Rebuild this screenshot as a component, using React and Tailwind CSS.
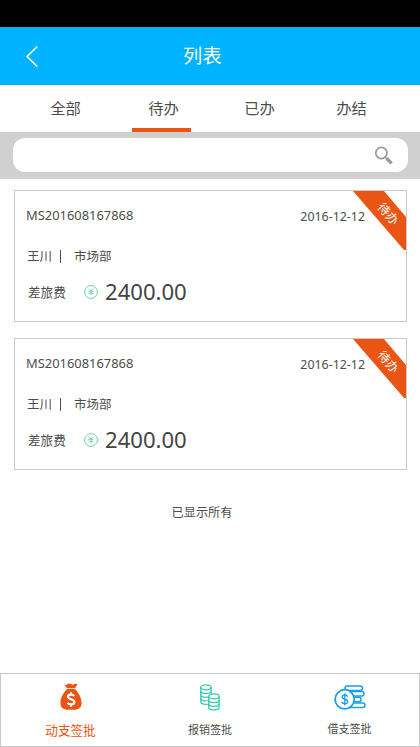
const TABS = [
  { id: 'all', label: '全部', className: 'ml-[50px]' },
  { id: 'todo', label: '待办', className: 'ml-[67px]' },
  { id: 'done', label: '已办', className: 'ml-[65px]' },
  { id: 'closed', label: '办结', className: 'ml-[61px]' },
]

const ITEMS = [
  { id: 1, code: 'MS201608167868', date: '2016-12-12', name: '王川', dept: '市场部', type: '差旅费', amount: '2400.00', status: '待办' },
  { id: 2, code: 'MS201608167868', date: '2016-12-12', name: '王川', dept: '市场部', type: '差旅费', amount: '2400.00', status: '待办' },
]

function YenIcon() {
  return (
    <svg width="14" height="14" viewBox="0 0 14 14" fill="none" stroke="#5ccb9c">
      <circle cx="7" cy="7" r="6.4" strokeWidth="0.9" />
      <path d="M5 3.6 7 6 9 3.6M4.3 6.3h5.4M4.3 8.3h5.4M7 6v4.6" strokeWidth="0.8" />
    </svg>
  )
}

function SearchIcon() {
  return (
    <svg width="18" height="19" viewBox="0 0 18 19" fill="none" stroke="#999">
      <circle cx="6.4" cy="7" r="5.6" strokeWidth="1.7" />
      <path d="m10.2 11 2 2" strokeWidth="1.4" />
      <path d="m11.7 12.5 4.9 4.9" strokeWidth="3.4" />
    </svg>
  )
}

function MoneyBagIcon() {
  return (
    <svg width="22" height="28" viewBox="0 0 22 28">
      <path d="M4.2 1.2Q6 2.6 7.7 1Q9.5-.2 11 1Q12.8 2.3 14.3 1Q16 .2 17.6 1.3L15 5.2H7Z" fill="#ea5514" />
      <path d="M7 6h8c3.200 3.300 6.600 8.800 6.600 13.800 0 5-3.300 7-7.200 7H7.600c-4 0-7.200-2-7.200-7C.4 14.800 3.800 9.300 7 6Z" fill="#ea5514" />
      <path d="M14.200 13c-.7-.9-1.800-1.400-3.200-1.400-1.800 0-3 .8-3 2.200 0 3.200 6.400 1.800 6.400 5.100 0 1.600-1.400 2.400-3.300 2.400-1.500 0-2.800-.5-3.600-1.500" fill="none" stroke="#fff" strokeWidth="2.100" />
      <path d="M11 9.300v2.500M11 21v2.700" stroke="#fff" strokeWidth="2" />
    </svg>
  )
}

function CoinsIcon() {
  return (
    <svg width="20" height="27" viewBox="0 0 20 27" fill="none" stroke="#3bcbb0" strokeWidth="1.3">
      <ellipse cx="6" cy="3.3" rx="5.2" ry="2.5" />
      <path d="M.8 3.3v14.5c0 1.6 2.2 2.6 5.2 2.6 1 0 1.900-.1 2.600-.4M11.200 3.300v6.200" />
      <path d="M.8 7c0 1.600 2.200 2.600 5.200 2.600S11.200 8.600 11.200 7M.8 10.700c0 1.600 2.200 2.600 5.200 2.600 1 0 1.900-.1 2.600-.4M.8 14.300c0 1.600 2.200 2.600 5.200 2.600 1 0 1.900-.1 2.600-.4" />
      <ellipse cx="13.900" cy="12.300" rx="5.200" ry="2.500" />
      <path d="M8.700 12.300v11c0 1.600 2.200 2.600 5.200 2.600s5.200-1 5.200-2.600v-11" />
      <path d="M8.700 16c0 1.600 2.200 2.600 5.200 2.600s5.200-1 5.200-2.600M8.700 19.700c0 1.600 2.200 2.600 5.200 2.600s5.200-1 5.200-2.600" />
    </svg>
  )
}

function LoanIcon() {
  return (
    <svg width="32" height="25" viewBox="0 0 32 25" fill="none" stroke="#1a9fe8" strokeWidth="1.5">
      <rect x="11" y="1" width="17.5" height="4.5" rx="2.2" />
      <rect x="14" y="6.5" width="16" height="4.5" rx="2.2" />
      <rect x="15" y="12.3" width="12" height="4.5" rx="2.2" />
      <rect x="13" y="18" width="18" height="4.5" rx="2.2" />
      <circle cx="10.7" cy="14.3" r="9.6" fill="#fff" strokeWidth="1.8" />
      <path d="M13.600 11.800c-.3-1.200-1.300-1.800-2.800-1.800-1.600 0-2.700.8-2.700 2.100 0 3 5.600 1.300 5.600 4.400 0 1.400-1.200 2.200-2.900 2.200s-2.800-.7-3.100-2M10.800 8.200v12.300" strokeWidth="1.3" />
    </svg>
  )
}

function Card({ item }) {
  return (
    <article className="relative h-[132px] border border-[#c9c9c9] pl-[11px] text-[13px] text-[#4d4d4d]">
      <div className="flex h-[50px] items-center justify-between pr-[41px]">
        <span className="text-[12.9px]">{item.code}</span>
        <span className="pt-0.5 text-[12.4px]">{item.date}</span>
      </div>
      <div className="flex h-[30px] items-center pl-px text-[12.5px]">
        <span className="pt-0.5">{item.name}</span>
        <span className="ml-[8px] h-[13px] w-px bg-[#4d4d4d]" />
        <span className="ml-[13px] pt-0.5">{item.dept}</span>
      </div>
      <div className="flex h-[42px] items-center pl-[2px]">
        <span className="w-[56px] pt-[3px] text-[12.6px]">{item.type}</span>
        <YenIcon />
        <span className="ml-[7px] text-[22.1px] text-[#444]">{item.amount}</span>
      </div>
      <div className="absolute top-0 right-0 h-[59px] w-[53px] overflow-hidden">
        <svg width="53" height="59" viewBox="0 0 53 59">
          <path d="M0 0h31l22 26v33h-2Z" fill="#ea5514" />
        </svg>
        <span className="absolute top-[13px] left-[22px] w-[26px] rotate-[48deg] text-center text-[12.3px] leading-5 text-white">
          {item.status}
        </span>
      </div>
    </article>
  )
}

export default function App() {
  return (
    <div className="flex h-[747px] w-[420px] flex-col overflow-hidden bg-white font-['Noto_Sans','Noto_Sans_CJK_SC',sans-serif] text-[#4d4d4d]">
      <div className="h-[27px] shrink-0 bg-black" />
      <header className="flex h-[58px] shrink-0 items-center bg-[#00b3ff] pl-[26px] text-white">
        <svg width="12" height="22" viewBox="0 0 12 22" fill="none" stroke="currentColor" strokeWidth="1.6">
          <path d="M11.3 1.500 1.100 11.500l10.200 10" />
        </svg>
        <h1 className="ml-[145px] text-[19.3px]">列表</h1>
      </header>

      <nav className="flex h-[47px] shrink-0 text-[15.3px] leading-[45px]">
        {TABS.map((tab) => (
          <button key={tab.id} className={`relative w-[31px] whitespace-nowrap ${tab.className}`}>
            {tab.label}
            {tab.id === 'todo' && <span className="absolute bottom-0 -left-4 h-1 w-[59px] bg-[#ea5514]" />}
          </button>
        ))}
      </nav>

      <div className="h-[47px] shrink-0 bg-[#d0d0d0] py-[6px] pr-[12px] pl-[13px]">
        <div className="flex h-[34px] items-center justify-end rounded-[12px] bg-white pt-px pr-[15px]">
          <SearchIcon />
        </div>
      </div>

      <main className="flex flex-1 flex-col gap-4 pt-[11px] pr-[13px] pl-[14px]">
        {ITEMS.map((item) => (
          <Card key={item.id} item={item} />
        ))}
        <p className="mt-[17px] pr-[17px] text-center text-[12.2px] leading-5">已显示所有</p>
      </main>

      <footer className="flex h-[74px] shrink-0 border border-[#c9c9c9] text-[11px]">
        <button className="flex w-[139px] flex-col items-center pt-[9px] text-[#ea5514]">
          <MoneyBagIcon />
          <span className="mt-[10px] text-[12.6px] leading-5">动支签批</span>
        </button>
        <button className="flex w-[140px] flex-col items-center pt-[10px]">
          <CoinsIcon />
          <span className="mt-[9px] leading-5">报销签批</span>
        </button>
        <button className="flex w-[139px] flex-col items-center pt-[11px]">
          <LoanIcon />
          <span className="mt-[9px] leading-5">借支签批</span>
        </button>
      </footer>
    </div>
  )
}
